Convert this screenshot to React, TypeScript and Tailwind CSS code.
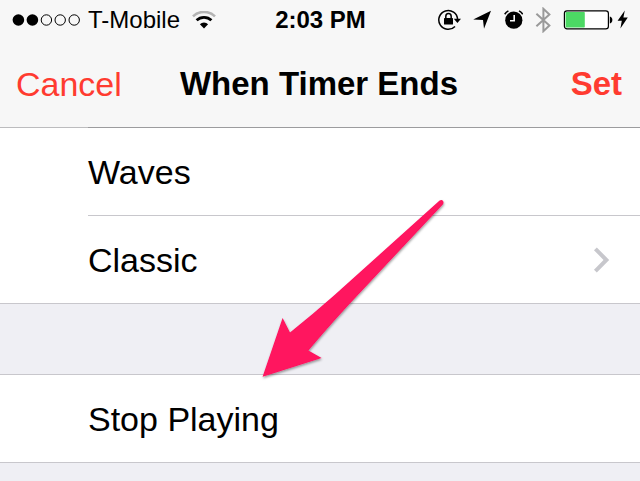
import type { ReactNode } from "react";

function SignalDots() {
  return (
    <svg width="68" height="14" viewBox="0 0 68 14" role="img" aria-label="Signal: 2 of 5">
      {[6.4, 20.4, 34.4, 48.2, 62.2].map((cx, i) => (
        <circle
          key={cx}
          cx={cx}
          cy="7"
          r={i < 2 ? 5.8 : 5.2}
          fill={i < 2 ? "#000" : "none"}
          stroke={i < 2 ? "none" : "#000"}
          strokeWidth="1"
        />
      ))}
    </svg>
  );
}

function WifiIcon() {
  return (
    <svg width="24" height="18" viewBox="0 0 24 18" fill="none" role="img" aria-label="Wi-Fi">
      <path d="M1 5.4 A15.8 15.8 0 0 1 23 5.4" stroke="#b4b4b4" strokeWidth="2.6" />
      <path d="M4.6 9.3 A10.6 10.6 0 0 1 19.4 9.3" stroke="#000" strokeWidth="2.8" />
      <path d="M12 17.4 L7.9 13.2 A5.8 5.8 0 0 1 16.1 13.2 Z" fill="#000" />
    </svg>
  );
}

function RotationLockIcon() {
  return (
    <svg width="24" height="22" viewBox="0 0 24 22" fill="none" aria-hidden="true">
      <path d="M20.6 10.4 A9.4 9.4 0 1 0 18 17.4" stroke="#000" strokeWidth="1.5" />
      <path d="M16.8 9.8 H24 L20.4 14 Z" fill="#000" />
      <rect x="7" y="9" width="9" height="6.6" rx="0.6" fill="#000" />
      <path d="M8.8 9.6 V7.4 A2.7 2.9 0 0 1 14.2 7.4 V9.6" stroke="#000" strokeWidth="1.5" />
    </svg>
  );
}

function LocationIcon() {
  return (
    <svg width="18" height="20" viewBox="0 0 18 20" aria-hidden="true">
      <path d="M18 0.8 L11 18.8 L10 10 L0.2 9.6 Z" fill="#000" />
    </svg>
  );
}

function AlarmIcon() {
  return (
    <svg width="20" height="20" viewBox="0 0 20 20" fill="none" aria-hidden="true">
      <circle cx="10.8" cy="10.2" r="8.6" fill="#000" />
      <path d="M11.2 5 V10.8 H7" stroke="#f7f7f7" strokeWidth="1.6" />
      <path d="M1.7 4.2 A10.8 10.8 0 0 1 5.4 0.9 M16 0.9 A10.8 10.8 0 0 1 19.8 4.2" stroke="#000" strokeWidth="1.6" />
    </svg>
  );
}

function BluetoothIcon() {
  return (
    <svg width="16" height="26" viewBox="0 0 16 26" fill="none" aria-hidden="true">
      <path d="M1.4 6.8 L14.4 18.6 L8.4 24.2 V1.8 L14.4 7.4 L1.4 19.2" stroke="#9a9a9a" strokeWidth="2" />
    </svg>
  );
}

function BatteryIcon() {
  return (
    <svg width="50" height="20" viewBox="0 0 50 20" fill="none" role="img" aria-label="Battery charging">
      <rect x="1.4" y="0.9" width="44" height="18" rx="2.6" fill="#fff" stroke="#000" strokeWidth="1.2" />
      <rect x="2.6" y="2" width="19.2" height="15.6" rx="0.8" fill="#4cd964" />
      <path d="M46.8 6.4 C50.2 7 50.2 12.8 46.8 13.4 Z" fill="#000" />
    </svg>
  );
}

function BoltIcon() {
  return (
    <svg width="12" height="20" viewBox="0 0 12 20" aria-hidden="true">
      <path d="M7.8 0.4 L0.6 10.8 H4.8 L3.4 18.6 L10.8 7.4 H6.4 Z" fill="#000" />
    </svg>
  );
}

function Chevron() {
  return (
    <svg width="17" height="26" viewBox="0 0 17 26" fill="none" aria-hidden="true">
      <path d="M2.4 1.8 L13.4 13 L2.4 24.2" stroke="#c7c7cc" strokeWidth="4" />
    </svg>
  );
}

function Row({ label, divided, chevron }: { label: string; divided?: boolean; chevron?: ReactNode }) {
  return (
    <li className="pl-[88px]">
      <button
        type="button"
        className={`flex w-full items-center justify-between pt-6 pr-[30px] pb-[23px] text-left ${
          divided ? "border-b border-[#c8c7cc]" : ""
        }`}
      >
        <span>{label}</span>
        {chevron}
      </button>
    </li>
  );
}

function PointerArrow() {
  return (
    <svg
      className="pointer-events-none absolute top-[190px] left-[250px]"
      width="210"
      height="200"
      viewBox="0 0 210 200"
      aria-hidden="true"
    >
      <defs>
        <filter id="arrow-shadow" x="-10%" y="-10%" width="120%" height="120%">
          <feDropShadow dx="0.5" dy="1.5" stdDeviation="1.1" floodColor="#000" floodOpacity="0.4" />
        </filter>
      </defs>
      <path
        d="M12.6 186.8 L32.6 128 L40 142.4 Q62 125 84 105.5 L189.6 10.6 Q192 9.4 193.2 11.2 Q194 12.8 192.8 14.4 L114 98.5 Q84 130 58.4 160.6 L71.6 168 Z"
        fill="#ff125f"
        filter="url(#arrow-shadow)"
      />
    </svg>
  );
}

export default function App() {
  return (
    <main className="relative min-h-screen overflow-hidden bg-[#efeff4] font-['Liberation_Sans',Arial,sans-serif] text-[34px] leading-10 text-black">
      <header className="bg-[#f7f7f7]">
        <div className="grid h-10 grid-cols-[1fr_auto_1fr] items-center pr-[11px] pl-3 text-2xl leading-10">
          <div className="flex items-center">
            <SignalDots />
            <span className="ml-2">T-Mobile</span>
            <span className="ml-3">
              <WifiIcon />
            </span>
          </div>
          <time className="font-bold">2:03 PM</time>
          <div className="flex items-center justify-end gap-3">
            <RotationLockIcon />
            <LocationIcon />
            <AlarmIcon />
            <BluetoothIcon />
            <div className="flex items-center gap-1">
              <BatteryIcon />
              <BoltIcon />
            </div>
          </div>
        </div>
        <nav className="grid h-[87px] grid-cols-[1fr_auto_1fr] items-center pr-[18px] pl-4">
          <button type="button" className="justify-self-start text-[#ff3b30]">
            Cancel
          </button>
          <h1 className="text-[33px] font-bold">When Timer Ends</h1>
          <button type="button" className="justify-self-end text-[33px] font-bold text-[#ff3b30]">
            Set
          </button>
        </nav>
        <div className="bg-[#bcbcbe] pl-[88px]">
          <div className="h-px bg-[#9c9c9e]" />
        </div>
      </header>

      <ul className="border-b border-[#c8c7cc] bg-white">
        <Row label="Waves" divided />
        <Row label="Classic" chevron={<Chevron />} />
      </ul>

      <ul className="mt-[70px] border-y border-[#c8c7cc] bg-white">
        <Row label="Stop Playing" />
      </ul>

      <PointerArrow />
    </main>
  );
}
